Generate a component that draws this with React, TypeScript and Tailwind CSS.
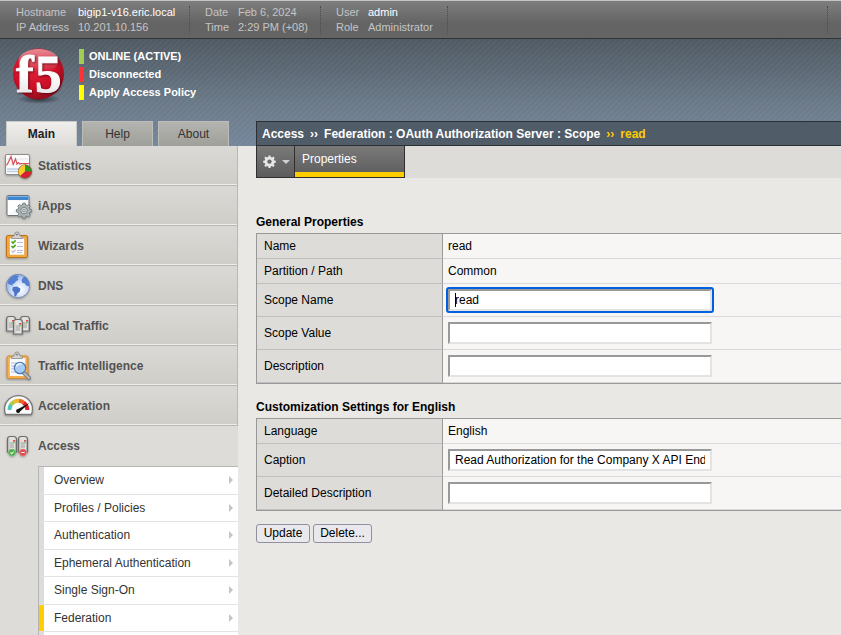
import React from "react";

const GEAR =
  "M-1.2-7h2.4l.4 1.9 1.5.6 1.6-1.1 1.7 1.7-1.1 1.6.6 1.5 1.9.4v2.4l-1.9.4-.6 1.5 1.1 1.6-1.7 1.7-1.6-1.1-1.5.6-.4 1.9h-2.4l-.4-1.9-1.5-.6-1.6 1.1-1.7-1.7 1.1-1.6-.6-1.5L-7.8 2v-2.4l1.9-.4.6-1.5-1.1-1.6 1.7-1.7 1.6 1.1 1.5-.6z";

function Icon({ children }: { children: React.ReactNode }) {
  return (
    <svg width="30" height="30" viewBox="0 0 30 30" aria-hidden="true" className="shrink-0 overflow-visible drop-shadow-[0_1px_1px_rgba(0,0,0,0.3)]">
      {children}
    </svg>
  );
}

function StatisticsIcon() {
  return (
    <Icon>
      <rect x="1.5" y="3.5" width="24" height="20" rx="1.5" fill="#fbfbfb" stroke="#8c8c8c" />
      <path d="M2.5 13h22M2.5 8h22" stroke="#e4e4e8" />
      <path d="M3 18h20M3 20.500h16" stroke="#b9cfe6" strokeWidth="1.600" />
      <path d="M2.500 14.500L4.500 11 7 5.500l2.200 8L11.500 8l1.500 5 1.500-1.500 1.500 1.500 2-.5H25" fill="none" stroke="#d4505a" strokeWidth="1.200" />
      <circle cx="21" cy="20.500" r="6.700" fill="#d81f35" stroke="#7d5a2c" strokeWidth=".8" />
      <path d="M21 20.500V14.100A6.400 6.400 0 0 0 16.200 24.800z" fill="#f5cf2c" />
      <path d="M21 20.500V14.100A6.400 6.400 0 0 1 27.400 20.500z" fill="#2c9a1e" />
    </Icon>
  );
}

function AppsIcon() {
  return (
    <Icon>
      <rect x="3" y="4.500" width="22" height="20" rx="1" fill="#f7f9fb" stroke="#6d747c" />
      <rect x="3.500" y="5" width="21" height="4" fill="#3f86cf" />
      <path d="M3.500 5.500h21" stroke="#7db3e6" />
      <path d="M4 24L22 10H4z" fill="#fff" />
      <g transform="translate(20 19) scale(.98)">
        <path d={GEAR} fill="#a9b3b4" stroke="#6f7a7b" strokeWidth=".9" />
        <circle r="3.400" cy=".6" fill="#c9d1d1" stroke="#7a8586" />
        <circle r="1.200" cy=".6" fill="#fff" stroke="#596465" strokeWidth=".7" />
      </g>
    </Icon>
  );
}

function Clip() {
  return (
    <>
      <path d="M7.500 7.500V6.200L10 4.700c.6-.4.900-1 1-1.700a2 2 0 0 1 4 0c.1.700.4 1.300 1 1.700l2.500 1.500v1.300z" fill="#d2d3d5" stroke="#85888c" strokeWidth=".8" />
      <circle cx="13" cy="3.600" r=".9" fill="#6b6e72" />
    </>
  );
}

function WizardsIcon() {
  return (
    <Icon>
      <rect x="2.500" y="4.500" width="21" height="22" rx="1.500" fill="#f5a53a" stroke="#b8741d" />
      <rect x="5.500" y="7" width="15" height="17" fill="#fdfdff" stroke="#d9a45c" strokeWidth=".6" />
      <path d="M13 11.500h6M13 15.500h6M13 19.500h6M13 21.500h5" stroke="#b9bce0" />
      <path d="M7.500 10.500l1.500 1.500 2.700-2.600M7.500 15l1.500 1.500 2.700-2.600" fill="none" stroke="#49a820" strokeWidth="1.700" />
      <path d="M7.500 19.800l1.500 1.500 2.700-2.600" fill="none" stroke="#c0c4d8" strokeWidth="1.400" />
      <Clip />
    </Icon>
  );
}

function DnsIcon() {
  return (
    <Icon>
      <defs>
        <radialGradient id="globe" cx=".6" cy=".65" r=".65">
          <stop offset="0" stopColor="#fbfdff" />
          <stop offset=".6" stopColor="#c9daf6" />
          <stop offset="1" stopColor="#8eafe4" />
        </radialGradient>
      </defs>
      <circle cx="14" cy="15" r="11.700" fill="url(#globe)" stroke="#7088b4" strokeWidth=".9" />
      <path d="M3.500 11.500C5 7.500 8 4.700 11.500 4l3.500 1-1.500 2.200 1 1.800-2.500 1.300-1.600 2.200-2 .5.6 2L7 14.100l-2.500-1z" fill="#5580d2" />
      <path d="M9 16.100l4-.6 3.500 2.300-.8 3-2.400 1.700-1.300 3-1.600-.5-.2-3.500-2-2.600z" fill="#4b74c8" />
      <path d="M17.500 9l2-3 2-.2c2 1.500 3.200 3.700 3.800 6.200l-.6 3.500-2.200-.8-2-2.400-2.200-.4z" fill="#5580d2" />
    </Icon>
  );
}

function Server({ x, y, h = 15 }: { x: number; y: number; h?: number }) {
  return (
    <g transform={`translate(${x} ${y})`}>
      <path d={`M.5 ${h}V3.500Q.5.500 3.500.5h3Q9.500.5 9.500 3.500V${h}z`} fill="#e2e2e1" stroke="#6c6c6c" strokeWidth="1.200" />
      <path d={`M1.800 3v${h - 4}M8.500 4v${h - 5}`} stroke="#b4b4b4" />
      <path d="M3 7h4M3 9h4M3 11h4" stroke="#979797" strokeWidth=".9" />
      <rect x="6.200" y="4" width="1.600" height="1.600" fill="#e3242f" />
      <rect x="6.200" y="6" width="1.600" height="1.300" fill="#7ac943" />
    </g>
  );
}

function LocalTrafficIcon() {
  return (
    <Icon>
      <Server x={2} y={5} />
      <Server x={16} y={5} />
      <Server x={9} y={8} />
    </Icon>
  );
}

function TrafficIntelligenceIcon() {
  return (
    <Icon>
      <rect x="3" y="5" width="21" height="22.500" rx="1.500" fill="#f7ad4c" stroke="#cf8b34" />
      <rect x="5.800" y="7" width="15.500" height="18" fill="#f8f9fc" />
      <path d="M7 12h6M7 15h5M7 18h5M7 21h7" stroke="#b3bdd6" />
      <path d="M20 22l5 5" stroke="#7c7f83" strokeWidth="4" strokeLinecap="round" />
      <path d="M20 22l5 5" stroke="#b9bcbf" strokeWidth="2" strokeLinecap="round" />
      <circle cx="16" cy="17" r="5.700" fill="#a9cdf2" stroke="#4f7cb8" strokeWidth="1.300" />
      <path d="M12.500 15.500a4 4 0 0 1 5-2.500" fill="none" stroke="#eef6ff" strokeWidth="1.600" />
      <Clip />
    </Icon>
  );
}

function AccelerationIcon() {
  return (
    <Icon>
      <path d="M1.500 23.500Q.3 20 .6 16.500A14 13.500 0 0 1 28.400 16.500Q28.700 20 27.500 23.500z" fill="#fbfbfb" stroke="#777" strokeWidth="1.300" />
      <path d="M5.500 19a9 9 0 0 1 1.600-5.500" fill="none" stroke="#4cc8bd" strokeWidth="4" />
      <path d="M7 13.600a9 9 0 0 1 3.300-2.900" fill="none" stroke="#b4c93f" strokeWidth="4" />
      <path d="M10.200 10.700a9 9 0 0 1 5-.9" fill="none" stroke="#f2b72c" strokeWidth="4" />
      <path d="M15 9.800a9 9 0 0 1 5 2.100" fill="none" stroke="#e9642a" strokeWidth="4" />
      <path d="M19.800 11.800a9.500 9.500 0 0 1 3.700 7.200" fill="none" stroke="#dc1f2d" strokeWidth="4" />
      <path d="M25.500 12L16 20.500a2 2 0 1 1-2-2.500z" fill="#111" />
    </Icon>
  );
}

function AccessIcon() {
  return (
    <Icon>
      <Server x={3} y={5} h={16} />
      <Server x={14} y={5} h={16} />
      <circle cx="8" cy="21.500" r="3.400" fill="#4cae48" stroke="#7cc07a" strokeWidth=".7" />
      <path d="M6.500 21.500l1.200 1.200 2-2.200" fill="none" stroke="#e5f7e3" strokeWidth="1.100" />
      <circle cx="19" cy="21.500" r="3.400" fill="#e0484b" stroke="#ea8485" strokeWidth=".7" />
      <path d="M17.300 21.500h3.400" stroke="#fff" strokeWidth="1.100" />
    </Icon>
  );
}

function Logo() {
  return (
    <svg width="56" height="60" viewBox="0 0 56 60" role="img" aria-label="f5" className="shrink-0">
      <defs>
        <radialGradient id="ball" cx=".42" cy=".35" r=".7">
          <stop offset="0" stopColor="#e02438" />
          <stop offset=".6" stopColor="#cf1128" />
          <stop offset="1" stopColor="#860c1a" />
        </radialGradient>
        <linearGradient id="gloss" x1="0" y1="0" x2="0" y2="1">
          <stop offset="0" stopColor="#fff" stopOpacity=".5" />
          <stop offset="1" stopColor="#fff" stopOpacity="0" />
        </linearGradient>
        <linearGradient id="mark" x1="0" y1="0" x2="0" y2="1">
          <stop offset=".5" stopColor="#fff" />
          <stop offset="1" stopColor="#dcdcde" />
        </linearGradient>
        <radialGradient id="shade">
          <stop offset="0" stopColor="#1c232b" stopOpacity=".8" />
          <stop offset="1" stopColor="#1c232b" stopOpacity="0" />
        </radialGradient>
      </defs>
      <ellipse cx="28" cy="53" rx="22" ry="5" fill="url(#shade)" />
      <circle cx="27.500" cy="28" r="25.500" fill="url(#ball)" />
      <ellipse cx="27.500" cy="15" rx="20" ry="12" fill="url(#gloss)" />
      <text
        x="5 24"
        y="46"
        fontSize="53"
        fontWeight="700"
        fill="url(#mark)"
        stroke="url(#mark)"
        className="font-['Liberation_Serif',serif] drop-shadow-[1px_1px_1px_rgba(70,0,10,0.7)]"
      >
        f5
      </text>
    </svg>
  );
}

function HeaderGroup({ rows, className }: { rows: [string, string, boolean][]; className: string }) {
  return (
    <dl className={`grid h-7 content-center border-r border-dotted border-[#4c4c4c] pl-[15px] text-[11px] leading-[15px] text-[#c4c4c4] ${className}`}>
      {rows.map(([label, value, strong]) => (
        <React.Fragment key={label}>
          <dt>{label}</dt>
          <dd className={strong ? "text-white" : ""}>{value}</dd>
        </React.Fragment>
      ))}
    </dl>
  );
}

const menu: [string, () => React.ReactElement][] = [
  ["Statistics", StatisticsIcon],
  ["iApps", AppsIcon],
  ["Wizards", WizardsIcon],
  ["DNS", DnsIcon],
  ["Local Traffic", LocalTrafficIcon],
  ["Traffic Intelligence", TrafficIntelligenceIcon],
  ["Acceleration", AccelerationIcon],
];

const submenu = ["Overview", "Profiles / Policies", "Authentication", "Ephemeral Authentication", "Single Sign-On", "Federation"];

function Sidebar() {
  return (
    <nav aria-label="Main menu" className="w-[238px] shrink-0 bg-[#dddcd8] font-bold text-[#525252]">
      <ul>
        {menu.map(([label, MenuIcon]) => (
          <li key={label} className="border-r border-b border-[#b8b8b8]">
            <a href="#" className="flex h-[39px] items-center gap-1 border-b border-[#efeeec] bg-linear-to-b from-[#dad9d5] to-[#cfcec9] pt-[2px] pl-1">
              <MenuIcon />
              {label}
            </a>
          </li>
        ))}
        <li>
          <a href="#" className="flex h-10 items-center gap-1 pl-1">
            <AccessIcon />
            Access
          </a>
          <ul className="ml-[38px] grid h-[166px] auto-rows-fr border-t border-l border-[#b5b5b5] font-normal text-[#333]">
            {submenu.map((label) => (
              <li key={label} className="border-b border-[#e2e2e2]">
                <a
                  href="#"
                  className={`flex h-full items-center justify-between border-l-5 bg-white pr-[5px] pl-[10px] ${
                    label === "Federation" ? "border-[#ffcc00]" : "border-[#dcdcdc]"
                  }`}
                >
                  {label}
                  <svg width="4" height="8" viewBox="0 0 4 8" aria-hidden="true">
                    <path d="M0 0l4 4-4 4z" fill="#c4c4c4" />
                  </svg>
                </a>
              </li>
            ))}
          </ul>
          <div className="ml-[38px] h-1 border-l border-[#b5b5b5]">
            <div className="h-full border-l-5 border-[#dcdcdc] bg-white" />
          </div>
        </li>
      </ul>
    </nav>
  );
}

type Field = { label: string; text?: string; value?: string; active?: boolean };

function PropertyTable({ title, fields }: { title: string; fields: Field[] }) {
  return (
    <section>
      <h2 className="h-[18px] leading-[14px] font-bold">{title}</h2>
      <table className="w-full border-separate border-spacing-0 border-y border-l border-[#999] bg-[#f7f6f4]">
        <tbody>
          {fields.map((f) => {
            const id = f.label.toLowerCase().replace(/ /g, "-");
            const height = f.text ? "h-[25px]" : "h-[33px]";
            return (
              <tr key={id} className={height}>
                <th scope="row" className="w-[186px] border-r border-b border-r-[#999] border-b-[#bfbfbf] bg-[#dddcd8] py-0 pl-[7px] text-left font-normal">
                  {f.text ? f.label : <label htmlFor={id}>{f.label}</label>}
                </th>
                <td className="border-b border-[#d9d9d9] py-0 pl-[5px]">
                  {f.text ?? (
                    <div className="relative w-[264px]">
                      <input
                        id={id}
                        type="text"
                        defaultValue={f.value}
                        className={`block h-[22px] w-full border-2 border-t-[#999] border-r-[#e3e3e3] border-b-[#e3e3e3] border-l-[#999] bg-white px-[5px] ${
                          f.active ? "rounded-[1px] outline-2 outline-[#0060df]" : "outline-none"
                        }`}
                      />
                      {f.active && <span className="absolute top-1 left-[7px] h-[14px] w-px bg-black" />}
                    </div>
                  )}
                </td>
              </tr>
            );
          })}
        </tbody>
      </table>
    </section>
  );
}

function NavTab({ label, active }: { label: string; active?: boolean }) {
  return (
    <button
      type="button"
      className={`h-[25px] w-[71px] border border-b-0 ${
        active
          ? "border-[#c9c9c6] bg-linear-to-b from-[#efeeec] to-[#dddcd8] font-bold text-[#222]"
          : "border-[#bcbcb8] bg-linear-to-b from-[#b3b3af] to-[#a0a09b] text-[#333]"
      }`}
    >
      {label}
    </button>
  );
}

export default function App() {
  return (
    <div className="flex min-h-screen flex-col overflow-x-hidden bg-[#e9e8e4] font-['Liberation_Sans',Arial,sans-serif] text-xs leading-4 text-black">
      <header>
        <div className="flex h-[39px] items-center border-t border-b border-t-[#c6c6c6] border-b-[#333] bg-linear-to-b from-[#7e7e7e] to-[#646464] to-60% pr-[13px] pl-px">
          <HeaderGroup className="w-[189px] grid-cols-[62px_1fr]" rows={[["Hostname", "bigip1-v16.eric.local", true], ["IP Address", "10.201.10.156", false]]} />
          <HeaderGroup className="w-[131px] grid-cols-[33px_1fr]" rows={[["Date", "Feb 6, 2024", false], ["Time", "2:29 PM (+08)", false]]} />
          <HeaderGroup className="w-[127px] grid-cols-[32px_1fr]" rows={[["User", "admin", true], ["Role", "Administrator", false]]} />
          <div className="h-7 grow border-r border-dotted border-[#4c4c4c]" />
        </div>
        <div className="flex h-[107px] flex-col justify-between bg-[repeating-linear-gradient(135deg,rgba(255,255,255,0.05)_0px,transparent_2px,rgba(255,255,255,0.05)_4px),linear-gradient(#4d5861,#6b7a8a_65%,#73859a)]">
          <div className="flex gap-[12px] pt-[7px] pl-[11px]">
            <Logo />
            <ul className="flex flex-col gap-[3px] pt-[3px] text-[11px] leading-[15px] font-bold text-white">
              <li className="border-l-5 border-[#9fce54] pl-[5px]">ONLINE (ACTIVE)</li>
              <li className="border-l-5 border-[#ff3333] pl-[5px]">Disconnected</li>
              <li className="border-l-5 border-[#ffff00] pl-[5px]">Apply Access Policy</li>
            </ul>
          </div>
          <div className="flex items-end">
            <div className="flex w-[256px] shrink-0 gap-[5px] pl-[6px]">
              <NavTab label="Main" active />
              <NavTab label="Help" />
              <NavTab label="About" />
            </div>
            <div className="flex h-[25px] min-w-0 grow items-center gap-[6px] border border-r-0 border-[#2c2f33] bg-[#505c67] pl-[5px] font-bold whitespace-nowrap text-white">
              <span>Access</span>
              <span>››</span>
              <span>Federation : OAuth Authorization Server : Scope</span>
              <span className="text-[#ffcc00]">››</span>
              <span className="text-[#ffcc00]">read</span>
            </div>
          </div>
        </div>
      </header>
      <div className="flex grow">
        <Sidebar />
        <main className="min-w-0 grow pl-[18px]">
          <div className="flex h-8 bg-[#dddcd8]">
            <button type="button" aria-label="Options" className="flex w-[39px] items-center gap-[6px] border border-t-0 border-[#2f2f2f] bg-linear-to-b from-[#7a7a7a] to-[#5c5c5c] pl-[6px]">
              <svg width="13" height="13" viewBox="-8 -7.500 16 16" aria-hidden="true">
                <path d={GEAR} fill="#e6e6e6" />
                <circle r="2.700" cy=".6" fill="#6a6a6a" />
              </svg>
              <svg width="8" height="4" viewBox="0 0 8 4" aria-hidden="true">
                <path d="M0 0h8l-4 4z" fill="#d0d0d0" />
              </svg>
            </button>
            <button type="button" className="w-[110px] border-r border-b border-[#2f2f2f] bg-linear-to-b from-[#7a7a7a] to-[#5c5c5c] text-left text-white">
              <span className="flex h-full flex-col justify-between border-b-5 border-[#ffcc00] pt-[5px] pl-[7px]">Properties</span>
            </button>
          </div>
          <form className="flex flex-col pt-[37px]" onSubmit={(e) => e.preventDefault()}>
            <PropertyTable
              title="General Properties"
              fields={[
                { label: "Name", text: "read" },
                { label: "Partition / Path", text: "Common" },
                { label: "Scope Name", value: "read", active: true },
                { label: "Scope Value" },
                { label: "Description" },
              ]}
            />
            <div className="pt-4">
              <PropertyTable
                title="Customization Settings for English"
                fields={[
                  { label: "Language", text: "English" },
                  { label: "Caption", value: "Read Authorization for the Company X API Endpoint" },
                  { label: "Detailed Description" },
                ]}
              />
            </div>
            <div className="flex gap-[3px] pt-[13px]">
              <button type="submit" className="h-[19px] w-[54px] rounded-[3px] border border-[#8f8f9d] bg-[#e9e9ed] leading-[17px]">
                Update
              </button>
              <button type="button" className="h-[19px] w-[59px] rounded-[3px] border border-[#8f8f9d] bg-[#e9e9ed] leading-[17px]">
                Delete...
              </button>
            </div>
          </form>
        </main>
      </div>
    </div>
  );
}
